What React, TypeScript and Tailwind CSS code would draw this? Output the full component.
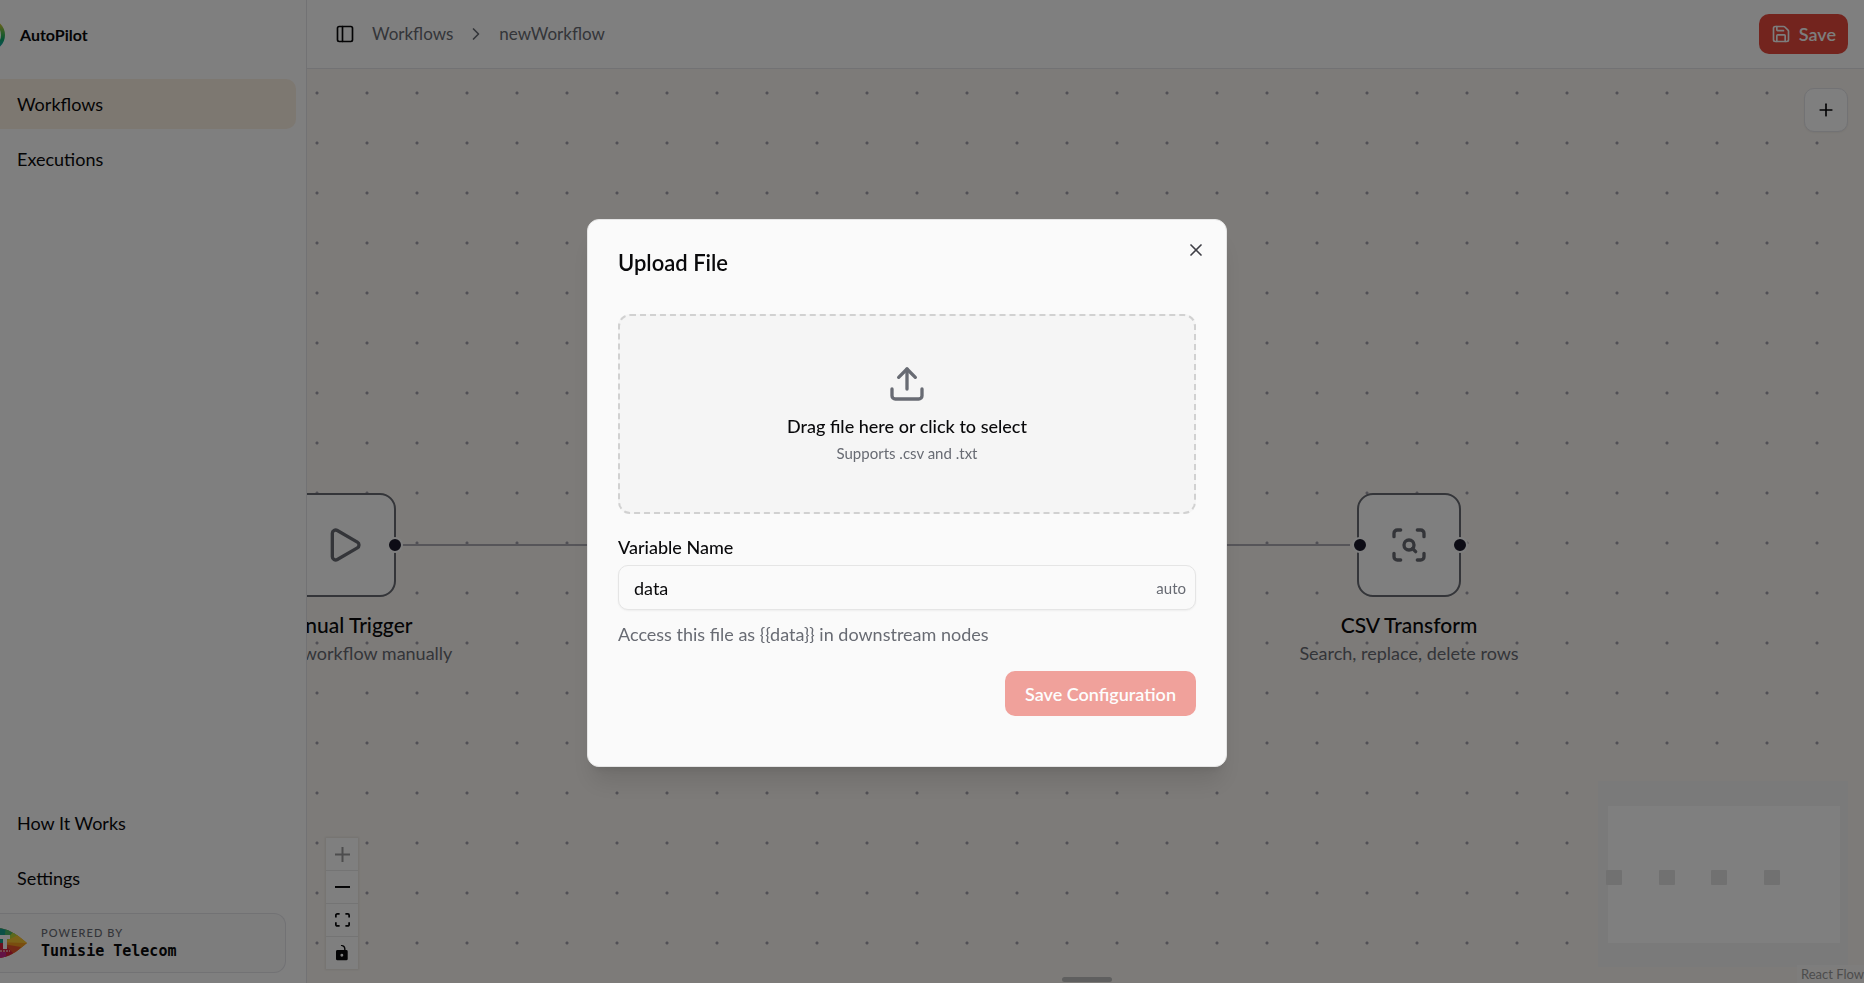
import type { ReactNode } from 'react';
import { ChevronRight, PanelLeft, Play, Plus, Save, ScanSearch, Upload, X } from 'lucide-react';

type NavItem = {
  label: string;
  active?: boolean;
};

const mainNav: NavItem[] = [{ label: 'Workflows', active: true }, { label: 'Executions' }];
const footerNav: NavItem[] = [{ label: 'How It Works' }, { label: 'Settings' }];

export default function App() {
  return (
    <div className="flex h-screen overflow-hidden bg-[#fefefe] font-['Lato',sans-serif] text-[18px] leading-6 text-[#09090b]">
      <Sidebar />
      <main className="flex min-w-0 flex-1 flex-col">
        <Header />
        <Canvas />
      </main>
      <UploadDialog />
    </div>
  );
}

function Sidebar() {
  return (
    <aside className="flex w-[307px] shrink-0 flex-col overflow-hidden border-r border-[#e4e4e9]">
      <div className="flex h-[69px] items-center gap-[15px]">
        <LogoMark />
        <span className="text-[16px] font-bold">AutoPilot</span>
      </div>
      <NavList items={mainNav} />
      <div className="mt-auto flex flex-col gap-[10px] pb-[10px]">
        <NavList items={footerNav} />
        <div className="mr-5 flex h-[60px] items-center gap-[13px] rounded-r-xl border border-l-0 border-[#e4e4e9] bg-[#fafafa]">
          <SponsorMark />
          <div>
            <p className="text-[11px] leading-4 font-medium tracking-widest text-[#686b73] uppercase">
              Powered by
            </p>
            <p className="font-['DejaVu_Sans_Mono',monospace] text-[15px] leading-5 font-bold">
              Tunisie Telecom
            </p>
          </div>
        </div>
      </div>
    </aside>
  );
}

function NavList({ items }: { items: NavItem[] }) {
  return (
    <nav className="flex flex-col gap-[5px] pt-[10px] pr-[10px]">
      {items.map((item) => (
        <a
          key={item.label}
          href="#"
          className={
            item.active
              ? 'flex h-[50px] items-center rounded-r-[10px] bg-[#fbf0e2] pl-[17px]'
              : 'flex h-[50px] items-center rounded-r-[10px] pl-[17px]'
          }
        >
          {item.label}
        </a>
      ))}
    </nav>
  );
}

function LogoMark() {
  return (
    <svg width="5" height="32" viewBox="27 0 5 32" fill="none" aria-hidden="true">
      <defs>
        <linearGradient id="ring" x1="0" y1="0" x2="0" y2="1">
          <stop offset="0" stopColor="#f2c12e" />
          <stop offset="0.35" stopColor="#6abf4b" />
          <stop offset="0.65" stopColor="#0fa968" />
          <stop offset="1" stopColor="#17a2c4" />
        </linearGradient>
      </defs>
      <circle cx="16" cy="16" r="14" stroke="url(#ring)" strokeWidth="4" />
    </svg>
  );
}

function SponsorMark() {
  return (
    <svg width="28" height="36" viewBox="0 0 28 36" aria-hidden="true">
      <defs>
        <clipPath id="leaf">
          <path d="M-28 18C-18 6 -6 2 2 3.500C12 5.500 20 12 27 18C20 24 12 31 2 32.500C-6 34 -18 30 -28 18Z" />
        </clipPath>
      </defs>
      <g clipPath="url(#leaf)">
        <path d="M0 0h28v36H0z" fill="#f4a52a" />
        <path d="M0 0h10l-4 18H0z" fill="#16a08c" />
        <path d="M6 0h8l2 8L4 17z" fill="#4cb868" />
        <path d="M15 5l6 5L4 17z" fill="#b9d43a" />
        <path d="M20 9l8 9L4 17z" fill="#f6c531" />
        <path d="M28 18l-9 7L4 18z" fill="#f39a1e" />
        <path d="M21 22l-8 10L3 19z" fill="#e5532b" />
        <path d="M13 28l-5 8H0V18h3z" fill="#d4213f" />
        <path d="M0 27h6v9H0z" fill="#c4268c" />
      </g>
      <path d="M0 10h10v4H7v10H3V14H0z" fill="#fff" />
      <path d="M0 26h10" stroke="#fff" strokeWidth="1" strokeDasharray="2 1" />
    </svg>
  );
}

function Header() {
  return (
    <header className="flex h-[69px] shrink-0 items-center justify-between border-b border-[#e4e4e9] pr-4 pl-7">
      <div className="flex items-center gap-[17px]">
        <button type="button" aria-label="Toggle sidebar">
          <PanelLeft className="size-5" />
        </button>
        <nav
          aria-label="Breadcrumb"
          className="flex items-center gap-[13px] text-[17px] text-[#686b73]"
        >
          <a href="#">Workflows</a>
          <ChevronRight className="size-5" />
          <a href="#">newWorkflow</a>
        </nav>
      </div>
      <button
        type="button"
        className="flex h-10 items-center gap-2 rounded-[10px] bg-[#e6483c] px-3 font-semibold text-[#fafafa]"
      >
        <Save className="size-5" strokeWidth={2} />
        Save
      </button>
    </header>
  );
}

function Canvas() {
  return (
    <div className="relative flex-1 overflow-hidden bg-[#fbf7f2] bg-[radial-gradient(circle,#a3a1ac_1px,transparent_2px)] bg-[size:50px_50px] bg-[position:-15px_-1px]">
      <svg className="absolute inset-0 size-full" aria-hidden="true">
        <path d="M95 476H1043" stroke="#adabb3" strokeWidth="2" />
      </svg>

      <FlowNode
        className="absolute top-[424px] left-[-115px]"
        title="Manual Trigger"
        subtitle="Execute workflow manually"
        icon={<Play className="size-10" strokeWidth={2} />}
        hasSource
      />
      <FlowNode
        className="absolute top-[424px] left-[950px]"
        title="CSV Transform"
        subtitle="Search, replace, delete rows"
        icon={<ScanSearch className="size-10" strokeWidth={2} />}
        hasTarget
        hasSource
      />

      <button
        type="button"
        aria-label="Add node"
        className="absolute top-[19px] right-4 flex size-11 items-center justify-center rounded-[10px] border border-[#e4e4e9] bg-[#fefefe] shadow-xs"
      >
        <Plus className="size-5" />
      </button>

      <Controls />
      <MiniMap />
      <div className="absolute bottom-px left-[755px] h-[5px] w-[50px] rounded-full bg-[#bfbfbf]" />
      <a
        href="#"
        className="absolute right-0 bottom-0 bg-white/50 pl-1 text-[13px] leading-[18px] text-[#999]"
      >
        React Flow
      </a>
    </div>
  );
}

function FlowNode({
  className,
  title,
  subtitle,
  icon,
  hasTarget,
  hasSource,
}: {
  className: string;
  title: string;
  subtitle: string;
  icon: ReactNode;
  hasTarget?: boolean;
  hasSource?: boolean;
}) {
  return (
    <div className={className}>
      <div className="flex w-[304px] flex-col items-center">
        <div className="relative flex size-[104px] items-center justify-center rounded-2xl border-2 border-[#686b73] bg-[#fefefe] text-[#686b73]">
          {icon}
          {hasTarget && (
            <span className="absolute top-1/2 -left-[7px] size-4 -translate-y-1/2 rounded-full border-2 border-[#fefefe] bg-[#1a192b]" />
          )}
          {hasSource && (
            <span className="absolute top-1/2 -right-[9px] size-4 -translate-y-1/2 rounded-full border-2 border-[#fefefe] bg-[#1a192b]" />
          )}
        </div>
        <p className="mt-4 text-[21px] leading-6 font-medium whitespace-nowrap">{title}</p>
        <p className="mt-1 whitespace-nowrap text-[#686b73]">{subtitle}</p>
      </div>
    </div>
  );
}

function Controls() {
  const button = 'flex size-8 items-center justify-center bg-[#fefefe]';

  return (
    <div className="absolute bottom-[14px] left-[19px] flex flex-col gap-px bg-[#e8e8e8] shadow-[0_0_2px_1px_rgba(0,0,0,0.08)]">
      <button type="button" aria-label="Zoom in" disabled className={button}>
        <svg viewBox="0 0 32 32" className="w-[15px] fill-current opacity-40">
          <path d="M32 18.133H18.133V32h-4.266V18.133H0v-4.266h13.867V0h4.266v13.867H32z" />
        </svg>
      </button>
      <button type="button" aria-label="Zoom out" className={button}>
        <svg viewBox="0 0 32 5" className="w-[15px] fill-current">
          <path d="M0 0h32v4.200H0z" />
        </svg>
      </button>
      <button type="button" aria-label="Fit view" className={button}>
        <svg viewBox="0 0 32 30" className="w-[15px] fill-current">
          <path d="M3.692 4.630c0-.53.4-.938.939-.938h5.215V0H4.708C2.130 0 0 2.054 0 4.630v5.216h3.692V4.631zM27.354 0h-5.200v3.692h5.170c.53 0 .984.4.984.939v5.215H32V4.631A4.624 4.624 0 0027.354 0zm.954 24.830c0 .532-.4.940-.939.940h-5.215v3.768h5.215c2.577 0 4.631-2.130 4.631-4.707v-5.139h-3.692v5.139zm-23.677.940c-.531 0-.939-.4-.939-.940v-5.138H0v5.139c0 2.577 2.130 4.707 4.708 4.707h5.138V25.770H4.631z" />
        </svg>
      </button>
      <button type="button" aria-label="Toggle interactivity" className={button}>
        <svg viewBox="0 0 25 32" className="w-[12px] fill-current">
          <path d="M21.333 10.667H19.810V7.619C19.810 3.429 16.380 0 12.190 0c-4.114 1.828-1.370 2.133.305 2.438 1.676.305 4.420 2.590 4.420 5.181v3.048H3.047A3.056 3.056 0 000 13.714v15.238A3.056 3.056 0 003.048 32h18.285a3.056 3.056 0 003.048-3.048V13.714a3.056 3.056 0 00-3.048-3.047zM12.190 24.533a3.056 3.056 0 01-3.047-3.047 3.056 3.056 0 013.047-3.048 3.056 3.056 0 013.048 3.048 3.056 3.056 0 01-3.048 3.047z" />
        </svg>
      </button>
    </div>
  );
}

function MiniMap() {
  return (
    <svg
      className="absolute right-4 bottom-4 bg-[#f5f5f4]"
      width="250"
      height="186"
      viewBox="0 0 250 186"
      aria-hidden="true"
    >
      <path d="M10 25h232v137H10z" fill="#fefefe" />
      {[8, 61, 113, 166].map((x) => (
        <rect key={x} x={x} y="89" width="16" height="15" rx="1" fill="#e2e2e2" />
      ))}
    </svg>
  );
}

function UploadDialog() {
  return (
    <div className="fixed inset-0 flex items-center justify-center bg-black/50 pt-[3px] pr-[50px]">
      <div
        role="dialog"
        aria-modal="true"
        aria-labelledby="upload-title"
        className="relative w-[640px] rounded-xl border border-[#e5e5e5] bg-[#fafafa] px-[30px] pt-[31px] pb-[50px] shadow-xl"
      >
        <button
          type="button"
          aria-label="Close"
          className="absolute top-5 right-5 text-[#3f3f46]"
        >
          <X className="size-5" strokeWidth={2} />
        </button>
        <h2 id="upload-title" className="text-[22px] leading-6 font-semibold">
          Upload File
        </h2>

        <label className="mt-[39px] flex h-[200px] cursor-pointer flex-col items-center justify-center rounded-xl border-2 border-dashed border-[#d1d1d1] bg-[#f5f5f5]">
          <input type="file" accept=".csv,.txt" className="sr-only" />
          <Upload className="size-10 text-[#686b73]" />
          <span className="mt-[10px] font-medium">Drag file here or click to select</span>
          <span className="mt-[3px] text-[15px] text-[#686b73]">Supports .csv and .txt</span>
        </label>

        <label htmlFor="variable" className="mt-[21px] block font-medium">
          Variable Name
        </label>
        <div className="relative mt-[6px]">
          <input
            id="variable"
            type="text"
            defaultValue="data"
            className="block h-[45px] w-full rounded-[10px] border border-[#e5e5e5] bg-[#fafafa] pr-14 pl-[15px] shadow-xs"
          />
          <span className="absolute inset-y-0 right-[10px] flex items-center text-[15px] text-[#686b73]">
            auto
          </span>
        </div>
        <p className="mt-3 text-[#686b73]">
          Access this file as {'{{data}}'} in downstream nodes
        </p>

        <div className="mt-[25px] flex justify-end">
          <button
            type="button"
            disabled
            className="h-[45px] rounded-[10px] bg-[#e6483c] px-5 font-semibold text-white opacity-50"
          >
            Save Configuration
          </button>
        </div>
      </div>
    </div>
  );
}
